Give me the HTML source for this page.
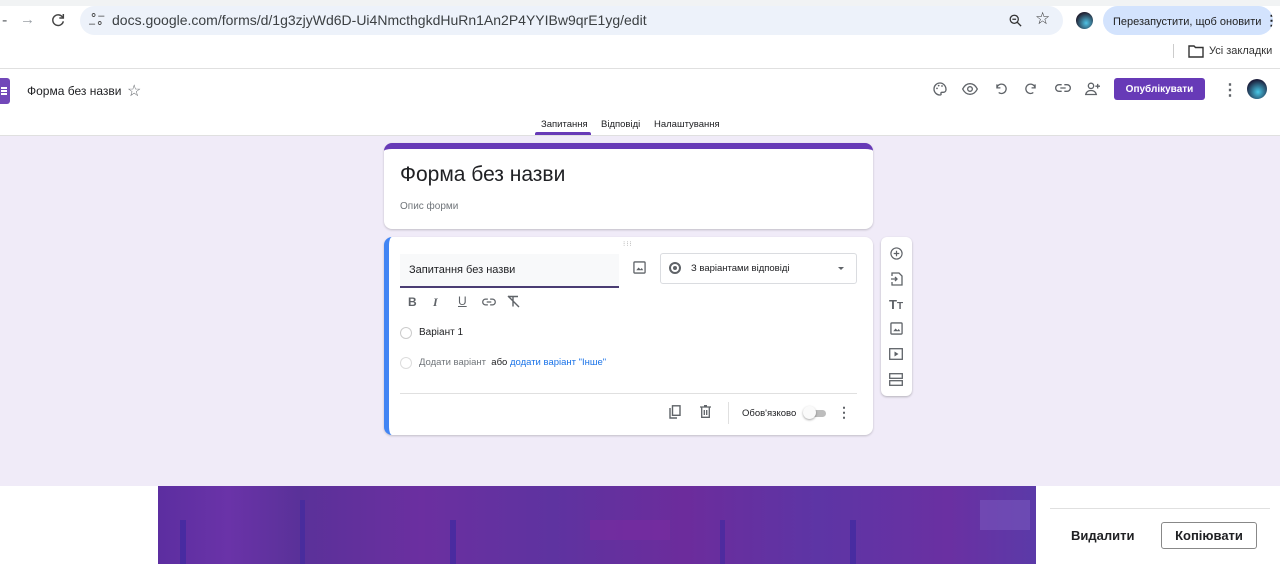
<!DOCTYPE html>
<html><head><meta charset="utf-8"><style>
*{margin:0;padding:0;box-sizing:border-box}
body{width:1280px;height:564px;overflow:hidden;background:#fff;font-family:"Liberation Sans",Arial,sans-serif;position:relative;color:#202124}
.a{position:absolute;white-space:nowrap}
svg{display:block}
</style></head><body>
<div class="a" style="left:0;top:0;width:1280px;height:6px;background:#f1f3f4"></div>
<div class="a" style="left:2px;top:12px;color:#5f6368;font-size:16px">‑</div>
<div class="a" style="left:20px;top:11px;color:#9aa0a6;font-size:15px">→</div>
<svg class="a" style="left:50px;top:12px" width="16" height="16" viewBox="0 0 24 24"><path d="M19 8a8 8 0 1 0 1 6" fill="none" stroke="#444" stroke-width="2.2"/><path d="M20 3v6h-6" fill="none" stroke="#444" stroke-width="2.2"/></svg>
<div class="a" style="left:80px;top:6px;width:983px;height:29px;background:#edf2fa;border-radius:15px"></div>
<div class="a" style="left:89px;top:12px;font-size:11px;color:#444;line-height:8px">⚬–<br>–⚬</div>
<div class="a" style="left:112px;top:12px;font-size:14px;color:#3c4043">docs.google.com/forms/d/1g3zjyWd6D-Ui4NmcthgkdHuRn1An2P4YYIBw9qrE1yg/edit</div>
<svg class="a" style="left:1008px;top:13px" width="15" height="15" viewBox="0 0 24 24"><circle cx="10" cy="10" r="6.5" fill="none" stroke="#333" stroke-width="2"/><path d="M15 15l6 6M7 10h6" stroke="#333" stroke-width="2"/></svg>
<div class="a" style="left:1035px;top:9px;font-size:17px;color:#333">☆</div>
<div class="a" style="left:1076px;top:12px;width:17px;height:17px;border-radius:50%;background:radial-gradient(circle at 60% 65%,#4fc3e6,#223 70%)"></div>
<div class="a" style="left:1103px;top:6px;width:170px;height:29px;background:#d3e3fd;border-radius:15px;font-size:11px;color:#1f1f1f;line-height:29px;padding-left:10px;overflow:hidden">Перезапустити, щоб оновити <b style="font-size:14px">⋮</b></div>
<div class="a" style="left:1173px;top:44px;width:1px;height:14px;background:#ccc"></div>
<svg class="a" style="left:1188px;top:44px" width="16" height="14" viewBox="0 0 16 14"><path d="M1 2h5l1.5 1.5H15V13H1z" fill="none" stroke="#333" stroke-width="1.4"/></svg>
<div class="a" style="left:1209px;top:45px;font-size:11px;color:#333">Усі закладки</div>
<div class="a" style="left:0;top:68px;width:1280px;height:1px;background:#e0e0e0"></div>
<div class="a" style="left:0;top:78px;width:10px;height:26px;background:#7248b9;border-radius:0 3px 3px 0"></div>
<div class="a" style="left:1px;top:87px;width:6px;height:1.5px;background:#fff;box-shadow:0 3px #fff,0 6px #fff"></div>
<div class="a" style="left:27px;top:84px;font-size:12px">Форма без назви</div>
<div class="a" style="left:127px;top:81px;font-size:16px;color:#5f6368">☆</div>
<svg class="a" style="left:932px;top:81px" width="16" height="16" viewBox="0 0 24 24"><path d="M12 3a9 9 0 0 0 0 18c1.5 0 2-1 1.5-2s0-2 1.5-2h2a4 4 0 0 0 4-4c0-5.5-4-10-9-10z" fill="none" stroke="#5f6368" stroke-width="2"/><circle cx="7.5" cy="11" r="1.3" fill="#5f6368"/><circle cx="10" cy="7" r="1.3" fill="#5f6368"/><circle cx="15" cy="7.5" r="1.3" fill="#5f6368"/></svg>
<svg class="a" style="left:962px;top:82px" width="16" height="14" viewBox="0 0 24 18"><path d="M1 9c3-6 7-8 11-8s8 2 11 8c-3 6-7 8-11 8S4 15 1 9z" fill="none" stroke="#5f6368" stroke-width="2"/><circle cx="12" cy="9" r="3.5" fill="none" stroke="#5f6368" stroke-width="2"/></svg>
<svg class="a" style="left:994px;top:82px" width="14" height="14" viewBox="0 0 24 24"><path d="M5 4v6h6M5 10a8 8 0 1 1 3 8" fill="none" stroke="#5f6368" stroke-width="2.2"/></svg>
<svg class="a" style="left:1024px;top:82px" width="14" height="14" viewBox="0 0 24 24"><path d="M19 4v6h-6M19 10a8 8 0 1 0-3 8" fill="none" stroke="#5f6368" stroke-width="2.2"/></svg>
<svg class="a" style="left:1055px;top:82px" width="16" height="12" viewBox="0 0 24 14"><path d="M10 2H6a5 5 0 0 0 0 10h4M14 2h4a5 5 0 0 1 0 10h-4M8 7h8" fill="none" stroke="#5f6368" stroke-width="2"/></svg>
<svg class="a" style="left:1085px;top:81px" width="16" height="15" viewBox="0 0 24 22"><circle cx="9" cy="7" r="4" fill="none" stroke="#5f6368" stroke-width="2"/><path d="M1 20c1-4 4-6 8-6s7 2 8 6zM19 4v7M15.5 7.5h7" fill="none" stroke="#5f6368" stroke-width="2"/></svg>
<div class="a" style="left:1114px;top:78px;width:91px;height:22px;background:#673ab7;border-radius:3px;color:#fff;font-size:10px;font-weight:bold;display:flex;align-items:center;justify-content:center">Опублікувати</div>
<div class="a" style="left:1222px;top:80px;font-size:16px;color:#5f6368;font-weight:bold">⋮</div>
<div class="a" style="left:1247px;top:79px;width:20px;height:20px;border-radius:50%;background:radial-gradient(circle at 55% 65%,#48c9e8,#1b1d3a 72%)"></div>
<div class="a" style="left:541px;top:119px;font-size:9.5px;color:#202124">Запитання</div>
<div class="a" style="left:535px;top:132px;width:56px;height:3px;background:#673ab7;border-radius:2px 2px 0 0"></div>
<div class="a" style="left:601px;top:119px;font-size:9.5px;color:#202124">Відповіді</div>
<div class="a" style="left:654px;top:119px;font-size:9.5px;color:#202124">Налаштування</div>
<div class="a" style="left:0;top:135px;width:1280px;height:351px;background:#f0ebf8;border-top:1px solid #e0e0e0"></div>
<div class="a" style="left:384px;top:143px;width:489px;height:86px;background:#fff;border-radius:8px;border-top:6px solid #673ab7;box-shadow:0 1px 2px rgba(0,0,0,.2)"></div>
<div class="a" style="left:400px;top:163px;font-size:21px">Форма без назви</div>
<div class="a" style="left:400px;top:201px;font-size:10px;color:#70757a">Опис форми</div>
<div class="a" style="left:384px;top:237px;width:489px;height:198px;background:#fff;border-radius:8px;border-left:5px solid #4285f4;box-shadow:0 1px 2px rgba(0,0,0,.2)"></div>
<div class="a" style="left:623px;top:240px;font-size:7px;color:#aaa;letter-spacing:1px">⁝⁝⁝</div>
<div class="a" style="left:400px;top:254px;width:219px;height:34px;background:#f8f9fa;border-bottom:2px solid #4a3d73"></div>
<div class="a" style="left:409px;top:264px;font-size:11px">Запитання без назви</div>
<svg class="a" style="left:633px;top:261px" width="13" height="13" viewBox="0 0 14 14"><rect x="1" y="1" width="12" height="12" rx="1" fill="none" stroke="#5f6368" stroke-width="1.4"/><path d="M3.5 10l2.5-3 2 2 1.5-1.5 1.5 2.5z" fill="#5f6368"/></svg>
<div class="a" style="left:660px;top:253px;width:197px;height:31px;border:1px solid #dadce0;border-radius:3px"></div>
<div class="a" style="left:669px;top:262px;width:12px;height:12px;border:2px solid #5f6368;border-radius:50%"><div style="margin:2px;width:4px;height:4px;background:#5f6368;border-radius:50%"></div></div>
<div class="a" style="left:691px;top:263px;font-size:9.5px">З варіантами відповіді</div>
<div class="a" style="left:838px;top:267px;width:0;height:0;border:3px solid transparent;border-top:3px solid #5f6368"></div>
<div class="a" style="left:408px;top:295px;font-size:12px;font-weight:bold;color:#5f6368">B</div>
<div class="a" style="left:433px;top:295px;font-size:12px;font-style:italic;font-family:'Liberation Serif',serif;font-weight:bold;color:#5f6368">I</div>
<div class="a" style="left:458px;top:294px;font-size:12px;text-decoration:underline;color:#5f6368">U</div>
<svg class="a" style="left:482px;top:298px" width="14" height="8" viewBox="0 0 24 14"><path d="M10 2H6a5 5 0 0 0 0 10h4M14 2h4a5 5 0 0 1 0 10h-4M8 7h8" fill="none" stroke="#5f6368" stroke-width="2.2"/></svg>
<svg class="a" style="left:507px;top:295px" width="13" height="13" viewBox="0 0 13 13"><path d="M1 1.5h10M6 1.5v10M1 1l11 11" fill="none" stroke="#5f6368" stroke-width="1.4"/></svg>
<div class="a" style="left:400px;top:327px;width:12px;height:12px;border:1.5px solid #ccc;border-radius:50%"></div>
<div class="a" style="left:419px;top:327px;font-size:10px">Варіант 1</div>
<div class="a" style="left:400px;top:357px;width:12px;height:12px;border:1.5px solid #ddd;border-radius:50%"></div>
<div class="a" style="left:419px;top:357px;font-size:9.5px;color:#70757a">Додати варіант <span style="color:#202124">&nbsp;або</span> <span style="color:#1a73e8">додати варіант "Інше"</span></div>
<div class="a" style="left:400px;top:393px;width:457px;height:1px;background:#e0e0e0"></div>
<svg class="a" style="left:669px;top:405px" width="12" height="14" viewBox="0 0 12 14"><rect x="3.5" y="0.8" width="7.5" height="9.5" fill="none" stroke="#5f6368" stroke-width="1.4"/><path d="M1 3v10h7" fill="none" stroke="#5f6368" stroke-width="1.4"/></svg>
<svg class="a" style="left:700px;top:405px" width="11" height="13" viewBox="0 0 11 13"><path d="M0 2h11M4 0.7h3M1.7 2.5v9.8h7.6V2.5M4.3 5v5M6.7 5v5" fill="none" stroke="#5f6368" stroke-width="1.3"/></svg>
<div class="a" style="left:728px;top:402px;width:1px;height:22px;background:#e0e0e0"></div>
<div class="a" style="left:742px;top:408px;font-size:9.5px;color:#202124">Обов'язково</div>
<div class="a" style="left:808px;top:410px;width:18px;height:7px;background:#bdbdbd;border-radius:4px"></div>
<div class="a" style="left:803px;top:406px;width:13px;height:13px;background:#fafafa;border-radius:50%;box-shadow:0 1px 2px rgba(0,0,0,.35)"></div>
<div class="a" style="left:837px;top:404px;font-size:14px;color:#5f6368;font-weight:bold">⋮</div>
<div class="a" style="left:881px;top:237px;width:31px;height:159px;background:#fff;border-radius:6px;box-shadow:0 1px 2px rgba(0,0,0,.25)"></div>
<svg class="a" style="left:890px;top:247px" width="13" height="13" viewBox="0 0 14 14"><circle cx="7" cy="7" r="6" fill="none" stroke="#5f6368" stroke-width="1.3"/><path d="M7 4v6M4 7h6" stroke="#5f6368" stroke-width="1.3"/></svg>
<svg class="a" style="left:891px;top:272px" width="12" height="14" viewBox="0 0 12 14"><path d="M1 4V1h7l3 3v9H1v-3M0 7h6M4 5l2 2-2 2" fill="none" stroke="#5f6368" stroke-width="1.3"/></svg>
<div class="a" style="left:889px;top:297px;font-size:13px;font-weight:bold;color:#5f6368">T<span style="font-size:10px">T</span></div>
<svg class="a" style="left:890px;top:322px" width="13" height="13" viewBox="0 0 14 14"><rect x="1" y="1" width="12" height="12" rx="1" fill="none" stroke="#5f6368" stroke-width="1.4"/><path d="M3.5 10l2.5-3 2 2 1.5-1.5 1.5 2.5z" fill="#5f6368"/></svg>
<svg class="a" style="left:889px;top:348px" width="14" height="12" viewBox="0 0 14 12"><rect x="0.7" y="0.7" width="12.6" height="10.6" fill="none" stroke="#5f6368" stroke-width="1.3"/><path d="M5.5 3.5v5l4-2.5z" fill="#5f6368"/></svg>
<svg class="a" style="left:889px;top:373px" width="14" height="13" viewBox="0 0 14 13"><rect x="0.7" y="0.7" width="12.6" height="4.6" fill="none" stroke="#5f6368" stroke-width="1.3"/><rect x="0.7" y="7.7" width="12.6" height="4.6" fill="none" stroke="#5f6368" stroke-width="1.3"/></svg>
<div class="a" style="left:158px;top:486px;width:878px;height:78px;background:linear-gradient(90deg,#5c2ea0 0%,#6a33a8 8%,#5a3199 16%,#6b2fa0 30%,#5e33a0 45%,#6c2c9c 60%,#5d35a5 75%,#6a30a2 90%,#5b3aa8 100%)"></div>
<div class="a" style="left:180px;top:520px;width:6px;height:44px;background:#3d2aa0;opacity:.7"></div>
<div class="a" style="left:300px;top:500px;width:5px;height:64px;background:#3d2aa0;opacity:.6"></div>
<div class="a" style="left:450px;top:520px;width:6px;height:44px;background:#3d2aa0;opacity:.7"></div>
<div class="a" style="left:590px;top:520px;width:80px;height:20px;background:#7a2ca0;opacity:.6"></div>
<div class="a" style="left:720px;top:520px;width:5px;height:44px;background:#3d2aa0;opacity:.6"></div>
<div class="a" style="left:850px;top:520px;width:6px;height:44px;background:#3d2aa0;opacity:.7"></div>
<div class="a" style="left:980px;top:500px;width:50px;height:30px;background:#7c5cc0;opacity:.5"></div>
<div class="a" style="left:1050px;top:508px;width:220px;height:1px;background:#e0e0e0"></div>
<div class="a" style="left:1071px;top:528px;font-size:13px;font-weight:bold;color:#202124">Видалити</div>
<div class="a" style="left:1161px;top:522px;width:96px;height:27px;border:1px solid #888;border-radius:3px;font-size:13px;font-weight:bold;text-align:center;line-height:25px;color:#202124">Копіювати</div>
</body></html>
